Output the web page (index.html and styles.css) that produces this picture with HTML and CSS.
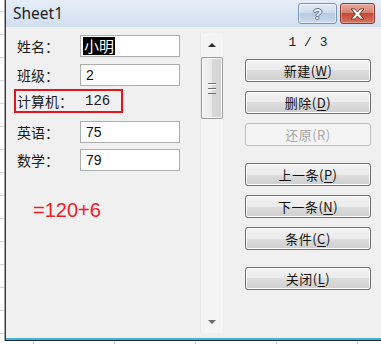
FILE: index.html
```html
<!DOCTYPE html>
<html lang="zh">
<head>
    <meta charset="utf-8">
    <title>Sheet1</title>
    <link rel="stylesheet" href="styles.css">
</head>
<body>

<div class="window">
    <div class="titlebar">
        <span class="title">Sheet1</span>
        <div class="caption-buttons">
            <div class="cap-btn help">?</div>
            <div class="cap-btn close">
                <svg width="15" height="12" viewBox="0 0 14 11">
                    <path d="M1 0.8 H4.6 L7 3.6 L9.4 0.8 H13 L8.9 5.5 L13 10.2 H9.4 L7 7.4 L4.6 10.2 H1 L5.1 5.5 Z" fill="#fff" stroke="#6b2a22" stroke-width="0.8" stroke-linejoin="round"/>
                </svg>
            </div>
        </div>
    </div>

    <div class="content">
        <div class="fields">
            <div class="field-grid">
                <label>姓名：</label>
                <div class="field"><span class="selected">小明</span></div>

                <label>班级：</label>
                <div class="field">2</div>

                <div class="computed">
                    <span class="computed-label">计算机：</span>
                    <span class="computed-value">126</span>
                </div>

                <label>英语：</label>
                <div class="field">75</div>

                <label>数学：</label>
                <div class="field">79</div>
            </div>
            <div class="note">=120+6</div>
        </div>

        <div class="scrollbar">
            <div class="arrow"><span class="tri-up"></span></div>
            <div class="thumb"><span class="grip"></span></div>
            <div class="track"></div>
            <div class="arrow"><span class="tri-down"></span></div>
        </div>

        <div class="actions">
            <div class="counter">1 / 3</div>
            <button class="btn">新建(<u>W</u>)</button>
            <button class="btn">删除(<u>D</u>)</button>
            <button class="btn" disabled>还原(R)</button>
            <button class="btn spaced">上一条(<u>P</u>)</button>
            <button class="btn">下一条(<u>N</u>)</button>
            <button class="btn">条件(<u>C</u>)</button>
            <button class="btn spaced">关闭(<u>L</u>)</button>
        </div>
    </div>
</div>

</body>
</html>
```

FILE: styles.css
```css
* {
    margin: 0;
    padding: 0;
    box-sizing: border-box;
}

html, body {
    width: 381px;
    height: 344px;
    overflow: hidden;
}

body {
    font-family: "Noto Sans CJK SC", sans-serif;
    color: #1a1a1a;
    background-color: #fff;
    background-image:
        repeating-linear-gradient(to right, transparent 0 33px, #d6d6d6 33px 34px, transparent 34px 81px),
        repeating-linear-gradient(to bottom, transparent 0 11px, #d6d6d6 11px 12px, transparent 12px 23px);
}

.window {
    margin-left: 5px;
    width: 376px;
    height: 341px;
    display: flex;
    flex-direction: column;
    background-color: #f0f0f0;
    border-left: 1px solid #313b42;
    border-bottom: 1px solid #1c2a32;
    box-shadow: -1px 0 0 #a4a4a4, inset 0 -2px 0 #41b4dd;
}

/* title bar */
.titlebar {
    height: 27px;
    display: flex;
    align-items: flex-start;
    padding-left: 7px;
    padding-right: 6px;
    background: linear-gradient(to bottom, #e5eef8, #d0dfef);
}

.title {
    font-family: "Noto Sans", sans-serif;
    font-size: 15.5px;
    line-height: 27px;
    color: #1e1e1e;
}

.caption-buttons {
    margin-left: auto;
    margin-top: 3px;
    display: flex;
    gap: 3px;
}

.cap-btn {
    height: 21px;
    display: flex;
    align-items: center;
    justify-content: center;
}

.help {
    width: 39px;
    border: 1px solid #7f94b0;
    border-radius: 3px;
    background: linear-gradient(to bottom, #e4ecf6, #cbdaec 50%, #b7cae2 50%, #cadbee);
    box-shadow: inset 0 0 0 1px rgba(255, 255, 255, 0.5);
    font-family: "Liberation Sans", sans-serif;
    font-weight: bold;
    font-size: 15px;
    color: #eef2f6;
    text-shadow: 1px 0 #67778b, -1px 0 #67778b, 0 1px #67778b, 0 -1px #67778b;
}

.close {
    width: 35px;
    border: 1px solid #8c3a30;
    border-radius: 3px;
    background: linear-gradient(to bottom, #e8aa9c, #d47e6e 50%, #c44835 50%, #d77460);
    box-shadow: inset 0 0 0 1px rgba(255, 255, 255, 0.3);
}

/* body */
.content {
    flex: 1;
    display: flex;
    align-items: flex-start;
    padding-top: 8px;
}

.fields {
    padding-left: 11px;
}

.field-grid {
    display: grid;
    grid-template-columns: 63px 100px;
    grid-auto-rows: 22px;
    row-gap: 6.5px;
}

.field-grid label {
    font-size: 14px;
    line-height: 22px;
}

.field {
    display: flex;
    align-items: center;
    padding-left: 5px;
    background-color: #fff;
    border: 1px solid #adadad;
    font-family: "Liberation Sans", sans-serif;
    font-size: 14px;
    color: #111;
}

.selected {
    margin-left: -3px;
    padding: 0 1px;
    background-color: #000;
    color: #fff;
    font-family: "Noto Sans CJK SC", sans-serif;
    font-size: 15px;
    line-height: 18px;
}

.computed {
    grid-column: 1 / span 2;
    align-self: start;
    display: flex;
    align-items: center;
    width: 109px;
    height: 24px;
    margin: -3px 0 0 -3px;
    padding-left: 1px;
    border: 2px solid #e3141b;
}

.computed-label {
    width: 63px;
    font-size: 14px;
}

.computed-value {
    padding-left: 5px;
    font-family: "Liberation Mono", monospace;
    font-size: 14px;
}

.note {
    margin-top: 27px;
    margin-left: 16px;
    font-family: "Liberation Sans", sans-serif;
    font-size: 20px;
    line-height: 24px;
    color: #ee1c24;
}

/* scrollbar */
.scrollbar {
    margin-left: 20px;
    margin-top: -2px;
    width: 23px;
    height: 300px;
    display: flex;
    flex-direction: column;
    background-color: #f4f4f4;
    border-left: 1px solid #e8e8e8;
}

.arrow {
    height: 23px;
    display: flex;
    align-items: center;
    justify-content: center;
}

.tri-up {
    border-left: 4px solid transparent;
    border-right: 4px solid transparent;
    border-bottom: 4px solid #2c2c2c;
}

.tri-down {
    border-left: 4px solid transparent;
    border-right: 4px solid transparent;
    border-top: 4px solid #6a6a6a;
}

.thumb {
    height: 62px;
    margin: 1px 0 0 0;
    display: flex;
    align-items: center;
    justify-content: center;
    border: 1px solid #9a9a9a;
    border-radius: 2px;
    background: linear-gradient(to right, #f3f3f3, #e9e9e9 50%, #d9d9d9 50%, #d2d2d2);
    box-shadow: inset 0 0 0 1px #f8f8f8;
}

.grip {
    width: 8px;
    height: 11px;
    background: repeating-linear-gradient(to bottom, #6f6f6f 0 1px, #fafafa 1px 2px, transparent 2px 5px);
}

.track {
    flex: 1;
}

/* buttons */
.actions {
    margin-left: 22px;
    width: 126px;
    display: flex;
    flex-direction: column;
    gap: 9px;
}

.counter {
    height: 16px;
    margin-bottom: -1px;
    text-align: center;
    font-family: "Liberation Mono", monospace;
    font-size: 13px;
    line-height: 16px;
    color: #222;
}

.btn {
    height: 23px;
    border: 1px solid #707070;
    border-radius: 3px;
    background: linear-gradient(to bottom, #f2f2f2, #ebebeb 50%, #dddddd 50%, #cfcfcf);
    box-shadow: inset 0 0 0 1px #fbfbfb;
    font-family: "Noto Sans CJK SC", sans-serif;
    font-size: 13px;
    letter-spacing: 0.5px;
    color: #111;
}

.btn u {
    text-underline-offset: 2px;
}

.btn:disabled {
    border-color: #bfbfbf;
    background: #f4f4f4;
    box-shadow: none;
    color: #a8a8a8;
}

.spaced {
    margin-top: 8px;
}
```
